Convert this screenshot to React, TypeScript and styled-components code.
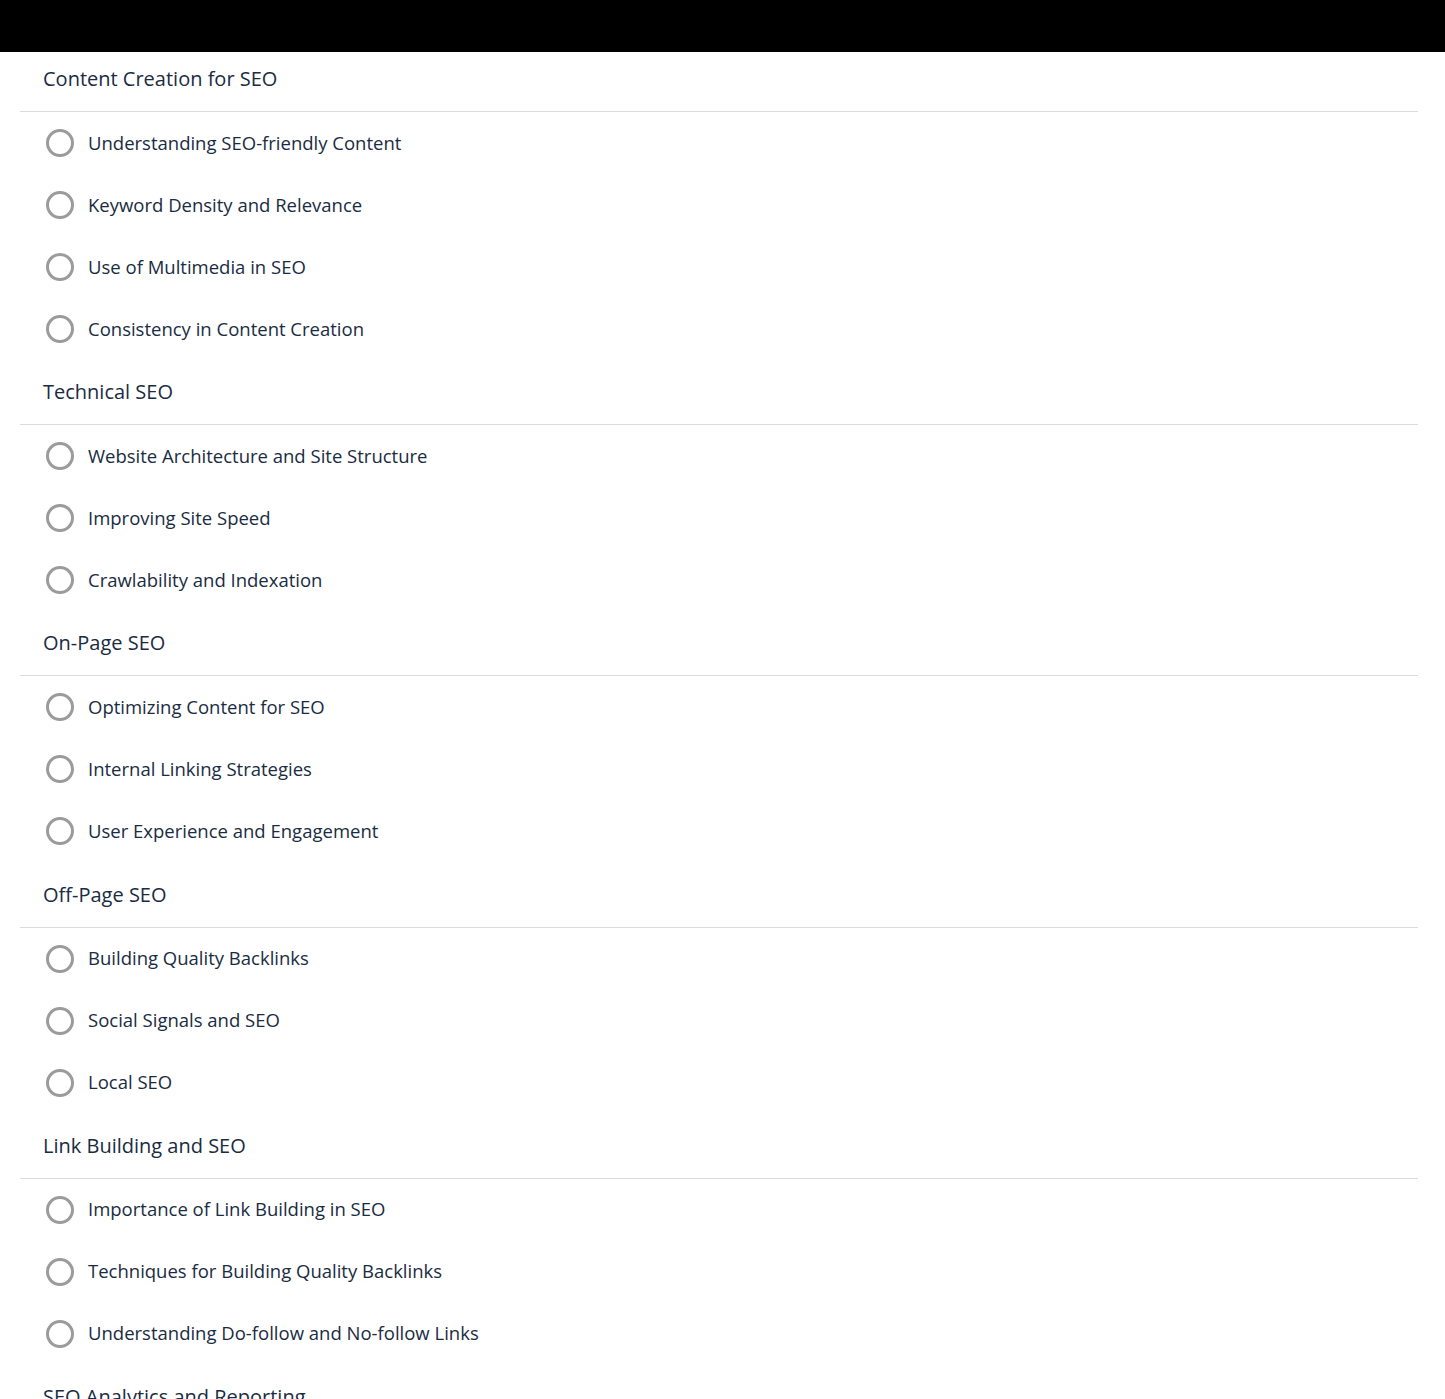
import styled, { createGlobalStyle } from "styled-components";

const GlobalStyle = createGlobalStyle`
  body {
    margin: 0;
    background: #ffffff;
    font-family: "Open Sans", "Liberation Sans", sans-serif;
    color: #1a2c42;
  }
`;

const TopBar = styled.div`
  height: 52px;
  background: #000;
`;

const Outline = styled.div`
  width: 1398px;
  margin-left: 20px;
  display: flex;
  flex-direction: column;
  gap: 5.2px;
`;

const Section = styled.section`
  display: flex;
  flex-direction: column;
`;

const SectionTitle = styled.h3`
  margin: 0;
  padding: 13px 23px 18px;
  font-size: 20px;
  line-height: 28px;
  font-weight: 400;
  border-bottom: 1px solid #dcdcdc;
`;

const LessonList = styled.ul`
  list-style: none;
  margin: 0;
  padding: 0;
`;

const LessonRow = styled.li`
  box-sizing: border-box;
  height: 62px;
  padding: 0 0 2px 26px;
  display: flex;
  align-items: center;
  gap: 14px;
  font-size: 18.5px;
`;

const Radio = styled.span`
  width: 22px;
  height: 22px;
  margin-top: 2px;
  border: 3px solid #9b9b9b;
  border-radius: 50%;
  flex-shrink: 0;
`;

const sections = [
  {
    title: "Content Creation for SEO",
    lessons: [
      "Understanding SEO-friendly Content",
      "Keyword Density and Relevance",
      "Use of Multimedia in SEO",
      "Consistency in Content Creation",
    ],
  },
  {
    title: "Technical SEO",
    lessons: [
      "Website Architecture and Site Structure",
      "Improving Site Speed",
      "Crawlability and Indexation",
    ],
  },
  {
    title: "On-Page SEO",
    lessons: [
      "Optimizing Content for SEO",
      "Internal Linking Strategies",
      "User Experience and Engagement",
    ],
  },
  {
    title: "Off-Page SEO",
    lessons: ["Building Quality Backlinks", "Social Signals and SEO", "Local SEO"],
  },
  {
    title: "Link Building and SEO",
    lessons: [
      "Importance of Link Building in SEO",
      "Techniques for Building Quality Backlinks",
      "Understanding Do-follow and No-follow Links",
    ],
  },
  {
    title: "SEO Analytics and Reporting",
    lessons: [
      "Setting Up Google Analytics",
      "Tracking SEO Performance",
      "Creating SEO Reports",
    ],
  },
];

const App = () => {
  return (
    <>
      <GlobalStyle />
      <TopBar />
      <Outline>
        {sections.map((section) => (
          <Section key={section.title}>
            <SectionTitle>{section.title}</SectionTitle>
            <LessonList>
              {section.lessons.map((lesson) => (
                <LessonRow key={lesson}>
                  <Radio />
                  {lesson}
                </LessonRow>
              ))}
            </LessonList>
          </Section>
        ))}
      </Outline>
    </>
  );
};

export default App;
